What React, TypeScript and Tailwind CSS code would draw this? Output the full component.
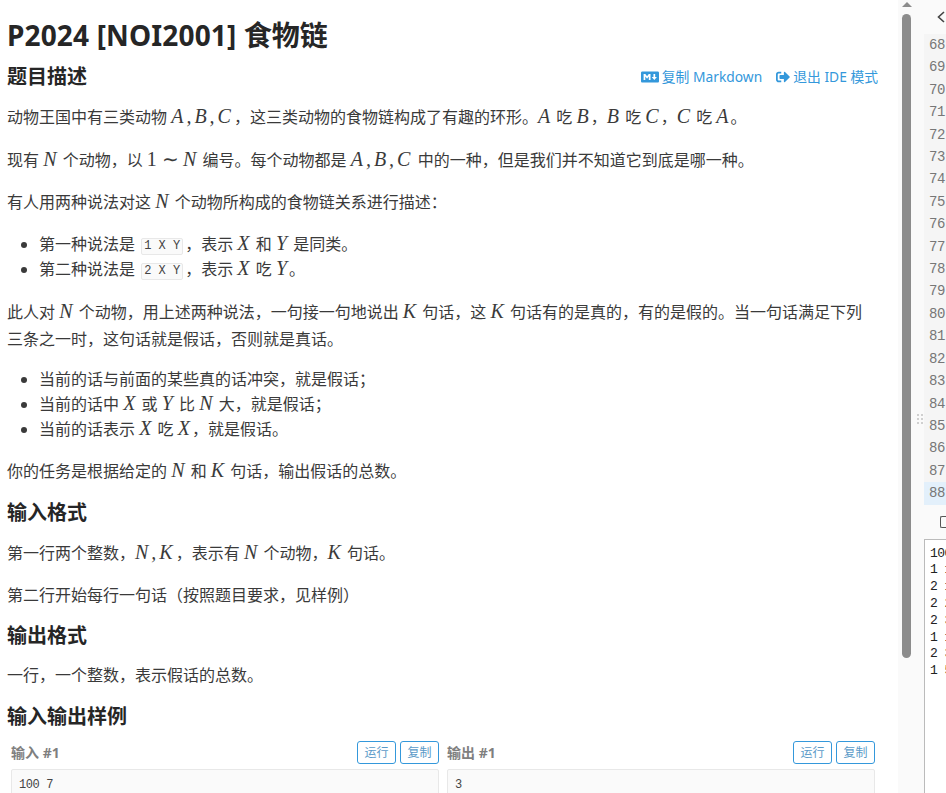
import { ReactNode } from 'react'
import { FaMarkdown, FaSignOutAlt } from 'react-icons/fa'

const lineNumbers = Array.from({ length: 21 }, (_, i) => 68 + i)
const stdin = ['100', '1 1', '2 1', '2 2', '2 3', '1 1', '2 3', '1 5']

function M({ children }: { children: ReactNode }) {
  return <span className="font-['Liberation_Serif',serif] italic text-[20px] leading-none tracking-[2px]">{children}</span>
}

// comma separated variables sit a little wider than single letters
function MList({ children }: { children: ReactNode }) {
  return <span className="font-['Liberation_Serif',serif] italic text-[20px] leading-none tracking-[3px]">{children}</span>
}

function Code({ children }: { children: ReactNode }) {
  return (
    <code className="mx-[2px] inline-block rounded-[2px] border border-[#e8e8e8] bg-[#fafafa] px-[2px] font-['Liberation_Mono','Noto_Sans_CJK_SC',monospace] text-[12px] leading-[15px] text-[#444] align-[1px]">
      {children}
    </code>
  )
}

function H2({ children, className }: { children: ReactNode; className: string }) {
  return <h2 className={`text-[20px] font-bold leading-[28px] text-[#262626] ${className}`}>{children}</h2>
}

function P({ children, className }: { children: ReactNode; className: string }) {
  return <p className={`leading-[27px] ${className}`}>{children}</p>
}

function SmallButton({ label }: { label: string }) {
  return (
    <button className="h-[23px] w-[39px] rounded-[3px] border border-[#3498db] bg-white text-center text-[12px] leading-[21px] text-[#5a9ac8]">
      {label}
    </button>
  )
}

function Sample({ title, value }: { title: string; value: string }) {
  return (
    <div className="w-[428px]">
      <div className="flex h-[23px] items-center justify-between">
        <span className="text-[14px] font-bold text-[#7f7f7f]">{title}</span>
        <div className="flex gap-[4px]">
          <SmallButton label="运行" />
          <SmallButton label="复制" />
        </div>
      </div>
      <pre className="mt-[5px] h-[60px] rounded-[2px] border border-[#e8e8e8] bg-[#fafafa] px-[7px] py-[5px] font-['Liberation_Mono',monospace] text-[12px] leading-[20px] tracking-[-0.4px] text-[#444]">
        {value}
      </pre>
    </div>
  )
}

function Statement() {
  return (
    <div className="h-[793px] w-[898px] shrink-0 overflow-hidden bg-white pl-[7px] pr-[20px] font-['Noto_Sans','Noto_Sans_CJK_SC',sans-serif] text-[16px] text-[#3a3a3a]">
      <h1 className="mt-[14px] text-[28px] font-bold leading-[42px] text-[#262626]">
        <span className="tracking-[0.15px]">P2024 [NOI2001]</span> 食物链
      </h1>
      <div className="mt-[7px] flex items-center justify-between">
        <H2 className="">题目描述</H2>
        <div className="flex items-center gap-[14px] text-[13.8px] text-[#3498db]">
          <span className="flex items-center gap-[3px]"><FaMarkdown className="text-[18px]" />复制 Markdown</span>
          <span className="flex items-center gap-[3px]"><FaSignOutAlt className="text-[14px]" />退出 IDE 模式</span>
        </div>
      </div>
      <P className="mt-[13px]">
        动物王国中有三类动物 <MList>A,B,C</MList>，这三类动物的食物链构成了有趣的环形。<M>A</M> 吃 <M>B</M>，<M>B</M> 吃 <M>C</M>，<M>C</M> 吃 <M>A</M>。
      </P>
      <P className="mt-[16px]">
        现有 <M>N</M> 个动物，以 <span className="font-['Liberation_Serif',serif] text-[20px] leading-none">1 ∼</span> <M>N</M> 编号。每个动物都是 <MList>A,B,C</MList> 中的一种，但是我们并不知道它到底是哪一种。
      </P>
      <P className="mt-[15px]">有人用两种说法对这 <M>N</M> 个动物所构成的食物链关系进行描述：</P>
      <ul className="mt-[16px] list-disc pl-[32px] leading-[25px] marker:text-[#3a3a3a]">
        <li>第一种说法是 <Code>1 X Y</Code>，表示 <M>X</M> 和 <M>Y</M> 是同类。</li>
        <li>第二种说法是 <Code>2 X Y</Code>，表示 <M>X</M> 吃 <M>Y</M>。</li>
      </ul>
      <P className="mt-[17px]">
        此人对 <M>N</M> 个动物，用上述两种说法，一句接一句地说出 <M>K</M> 句话，这 <M>K</M> 句话有的是真的，有的是假的。当一句话满足下列三条之一时，这句话就是假话，否则就是真话。
      </P>
      <ul className="mt-[14px] list-disc pl-[32px] leading-[25px]">
        <li>当前的话与前面的某些真的话冲突，就是假话；</li>
        <li>当前的话中 <M>X</M> 或 <M>Y</M> 比 <M>N</M> 大，就是假话；</li>
        <li>当前的话表示 <M>X</M> 吃 <M>X</M>，就是假话。</li>
      </ul>
      <P className="mt-[16px]">你的任务是根据给定的 <M>N</M> 和 <M>K</M> 句话，输出假话的总数。</P>
      <H2 className="mt-[14px]">输入格式</H2>
      <P className="mt-[13px]">第一行两个整数，<MList>N,K</MList>，表示有 <M>N</M> 个动物，<M>K</M> 句话。</P>
      <P className="mt-[15px]">第二行开始每行一句话（按照题目要求，见样例）</P>
      <H2 className="mt-[13px]">输出格式</H2>
      <P className="mt-[12px]">一行，一个整数，表示假话的总数。</P>
      <H2 className="mt-[14px]">输入输出样例</H2>
      <div className="mt-[10px] flex gap-[8px] pl-[4px]">
        <Sample title="输入 #1" value="100 7" />
        <Sample title="输出 #1" value="3" />
      </div>
    </div>
  )
}

function Scrollbar() {
  return (
    <div className="flex h-[793px] w-[18px] shrink-0 flex-col bg-[#fafafa] pl-[4px]">
      <div className="mt-[2px] h-0 w-0 border-x-[5px] border-b-[5px] border-x-transparent border-b-[#8c8c8c]" />
      <div className="mt-[7px] h-[644px] w-[9px] rounded-full bg-[#8c8c8c]" />
    </div>
  )
}

function EditorPane() {
  return (
    <div className="flex min-w-0 flex-1 bg-[#fafafa]">
      <div className="flex w-[8px] shrink-0 flex-col items-center pt-[414px]">
        <div className="grid grid-cols-2 gap-[2px]">
          {Array.from({ length: 6 }, (_, i) => <span key={i} className="h-[2px] w-[2px] bg-[#d0d0d0]" />)}
        </div>
      </div>
      <div className="min-w-0 flex-1 overflow-hidden font-['Liberation_Mono',monospace] text-[#777]">
        <div className="flex h-[34px] items-center justify-end pr-[1px] text-[#444]">
          <svg width="8" height="12" viewBox="0 0 8 12" fill="none" stroke="currentColor" strokeWidth="1.6"><path d="M7 1 1.5 6 7 11" /></svg>
        </div>
        <div className="bg-[#f5f5f5] text-[14px] leading-[22.4px] tracking-[-0.5px]">
          {lineNumbers.map((n) => (
            <div key={n} className={n === 88 ? 'bg-[#e3f0fb] pl-[5px]' : 'pl-[5px]'}>{n}</div>
          ))}
        </div>
        <div className="flex h-[34px] items-center pl-[16px]">
          <span className="h-[12px] w-[8px] rounded-l-[2px] border-y border-l border-[#555]" />
        </div>
        <div className="h-[256px] border-l border-t border-[#bbb] bg-white pl-[5px] pt-[6px] text-[13px] leading-[16.8px] tracking-[-0.5px] text-[#222]">
          {stdin.map((line, i) => <div key={i} className="whitespace-pre">{line}</div>)}
        </div>
      </div>
    </div>
  )
}

export default function App() {
  return (
    <div className="flex h-[793px] w-[946px] overflow-hidden">
      <Statement />
      <Scrollbar />
      <EditorPane />
    </div>
  )
}
